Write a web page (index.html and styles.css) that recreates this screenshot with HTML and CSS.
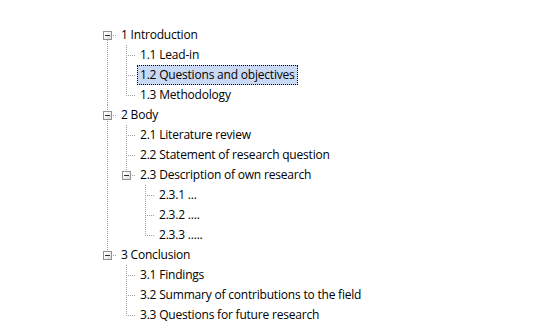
FILE: index.html
```html
<!DOCTYPE html>
<html lang="en">
<head>
  <meta charset="UTF-8">
  <title>Thesis Outline</title>
  <link rel="stylesheet" href="styles.css">
</head>
<body>
  <ul class="tree root">
    <li class="open">
      <span class="toggle"></span>
      <span class="label">1 Introduction</span>
      <ul class="tree">
        <li><span class="label">1.1 Lead-in</span></li>
        <li><span class="label selected">1.2 Questions and objectives</span></li>
        <li><span class="label">1.3 Methodology</span></li>
      </ul>
    </li>
    <li class="open">
      <span class="toggle"></span>
      <span class="label">2 Body</span>
      <ul class="tree">
        <li><span class="label">2.1 Literature review</span></li>
        <li><span class="label">2.2 Statement of research question</span></li>
        <li class="open">
          <span class="toggle"></span>
          <span class="label">2.3 Description of own research</span>
          <ul class="tree">
            <li><span class="label">2.3.1 ...</span></li>
            <li><span class="label">2.3.2 ....</span></li>
            <li><span class="label">2.3.3 .....</span></li>
          </ul>
        </li>
      </ul>
    </li>
    <li class="open">
      <span class="toggle"></span>
      <span class="label">3 Conclusion</span>
      <ul class="tree">
        <li><span class="label">3.1 Findings</span></li>
        <li><span class="label">3.2 Summary of contributions to the field</span></li>
        <li><span class="label">3.3 Questions for future research</span></li>
      </ul>
    </li>
  </ul>
</body>
</html>
```

FILE: styles.css
```css
body {
  margin: 0;
  background: #fff;
  font-family: "Open Sans", "Noto Sans", sans-serif;
  font-size: 12px;
  letter-spacing: -0.2px;
  color: #000;
}
.tree {
  list-style: none;
  margin: 0;
  padding: 0;
}
.root {
  padding: 25px 0 0 102px;
}
.tree .tree {
  margin-left: 3px;
}
.tree li {
  position: relative;
  padding-left: 16px;
}
/* vertical connector */
.tree li::before {
  content: "";
  position: absolute;
  left: 5px;
  top: 0;
  bottom: 0;
  width: 1px;
  background: repeating-linear-gradient(to bottom, #a0a0a0 0 1px, transparent 1px 2px);
}
.tree li:last-child::before {
  bottom: auto;
  height: 10px;
}
.root > li:first-child::before {
  top: 11px;
}
/* horizontal connector */
.tree li::after {
  content: "";
  position: absolute;
  left: 5px;
  top: 10px;
  width: 10px;
  height: 1px;
  background: repeating-linear-gradient(to right, #a0a0a0 0 1px, transparent 1px 2px);
}
.toggle {
  position: absolute;
  z-index: 1;
  left: 1px;
  top: 6px;
  width: 9px;
  height: 9px;
  box-sizing: border-box;
  border: 1px solid #919191;
  background: linear-gradient(135deg, #ffffff 20%, #d9d9d9);
}
.toggle::after {
  content: "";
  position: absolute;
  left: 1px;
  top: 3px;
  width: 5px;
  height: 1px;
  background: #2b2b3a;
}
.label {
  display: inline-block;
  height: 20px;
  line-height: 18px;
  padding: 0 2px;
  border: 1px solid transparent;
  box-sizing: border-box;
  white-space: nowrap;
}
.label.selected {
  background: #cbdaf4;
  border: 1px dotted #000;
}
```
